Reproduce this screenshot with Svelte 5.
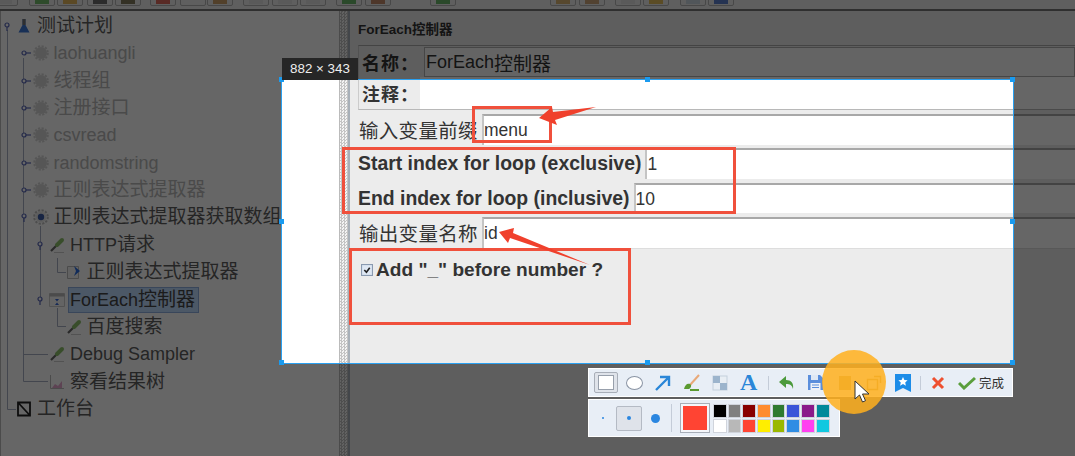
<script>
  const topButtons = [
    [-8, '#ddd'], [29, '#3fa535'], [57, '#e0a020'], [87, '#333'], [115, '#554a20'],
    [150, '#d83020'], [180, '#eee'], [207, '#c08030'], [243, '#ddd'], [272, '#ddd'],
    [300, '#ddd'], [336, '#30a030'], [365, '#b06030'], [430, '#30a030'], [550, '#d09a40'],
    [579, '#c08848'], [615, '#ddd'], [643, '#e0a820'], [680, '#bcd'], [708, '#2050c0']
  ];

  const tree = [
    { level: 0, toggle: 'open', icon: 'flask', text: '测试计划', cjk: true },
    { level: 1, toggle: 'shut', icon: 'gear', text: 'laohuangli', off: true },
    { level: 1, toggle: 'shut', icon: 'gear', text: '线程组', cjk: true, off: true },
    { level: 1, toggle: 'shut', icon: 'gear', text: '注册接口', cjk: true, off: true },
    { level: 1, toggle: 'shut', icon: 'gear', text: 'csvread', off: true },
    { level: 1, toggle: 'shut', icon: 'gear', text: 'randomstring', off: true },
    { level: 1, toggle: 'shut', icon: 'gear', text: '正则表达式提取器', cjk: true, off: true },
    { level: 1, toggle: 'open', icon: 'gearOn', text: '正则表达式提取器获取数组', cjk: true },
    { level: 2, toggle: 'open', icon: 'dropper', text: 'HTTP', tail: '请求' },
    { level: 3, icon: 'extract', text: '正则表达式提取器', cjk: true },
    { level: 2, toggle: 'open', icon: 'loop', text: 'ForEach', tail: '控制器', selected: true },
    { level: 3, icon: 'dropper', text: '百度搜索', cjk: true },
    { level: 2, icon: 'dropper', text: 'Debug Sampler' },
    { level: 2, icon: 'chart', text: '察看结果树', cjk: true },
    { level: 0, icon: 'bench', text: '工作台', cjk: true }
  ];

  const handles = [
    [0, 0], [50, 0], [100, 0], [0, 50], [100, 50], [0, 100], [50, 100], [100, 100]
  ];

  const swatches = [
    '#000000', '#808080', '#880000', '#ff8c2f', '#2f7a2f', '#3b55d8', '#8a1a8a', '#00899a',
    '#ffffff', '#b8b8b8', '#ff4433', '#ffee00', '#9ab800', '#2f8de4', '#ff40f0', '#10c8e0'
  ];
</script>

{#snippet treeIcon(name)}
  <svg class="ticon" viewBox="0 0 16 16" width="16" height="16">
    {#if name === 'flask'}
      <path d="M6.500 1h3v6l4 7.500h-11l4-7.500z" fill="#3c78d8" />
      <path d="M6.500 1h3v6h-3z" fill="#777" />
    {:else if name === 'gear'}
      <circle cx="8" cy="8" r="6" fill="#d8d8d8" />
      <circle cx="8" cy="8" r="6.800" fill="none" stroke="#d8d8d8" stroke-width="2" stroke-dasharray="2.200 1.400" />
    {:else if name === 'gearOn'}
      <circle cx="8" cy="8" r="6.800" fill="none" stroke="#c0c0c0" stroke-width="2" stroke-dasharray="2.200 1.400" />
      <circle cx="8" cy="8" r="5.400" fill="#e8e8e8" />
      <circle cx="8" cy="8" r="3.200" fill="#3c5ca8" />
    {:else if name === 'dropper'}
      <path d="M2 14l7-7" stroke="#666" stroke-width="2.200" />
      <path d="M8 8l5-5" stroke="#8cc06a" stroke-width="4" stroke-linecap="round" />
      <path d="M5 15.500h10" stroke="#ccc" />
    {:else if name === 'extract'}
      <path d="M1.500 2.500h11v12h-11z" fill="#f4f4f4" stroke="#bbb" />
      <path d="M8 2l6 5-6 5 2-5z" fill="#2a6ce0" />
    {:else if name === 'loop'}
      <path d="M.5 1.500h15v13H.5z" fill="#fafafa" stroke="#ccc" />
      <path d="M.5 1.500h15v3H.5z" fill="#bbb" />
      <path d="M6 7h4l-2 2.500zM6 13h4l-2-2.500z" fill="#3a6ad8" />
    {:else if name === 'chart'}
      <path d="M1.500 1v13.500H15" fill="none" stroke="#bbb" />
      <path d="M3 14l3-4 3 2 4-5v7z" fill="#e8a8d0" />
    {:else}
      <path d="M2 1.500h12v13H2zM2 1.500l12 13" fill="none" stroke="#222" stroke-width="1.800" />
    {/if}
  </svg>
{/snippet}

<div class="app">
  <div class="topbar">
    {#each topButtons as [left, color]}
      <span class="tbtn" style="left:{left}px"><i style="background:{color}"></i></span>
    {/each}
  </div>

  <div class="main">
    <div class="tree">
      <svg class="guides" viewBox="0 11 340 445" width="340" height="445">
        <path d="M7.500 30v379.500H18M23.500 58v323.500H48M23.500 354.500H48M40.500 226v72M57.500 258v14.500H66M57.500 308v18.500H66" />
      </svg>
      {#each tree as row}
        <div class="node" style="padding-left:{row.level * 16.5}px">
          <span class="toggle">
            {#if row.toggle === 'open'}
              <svg viewBox="0 0 14 14" width="14" height="14"><circle cx="7" cy="6" r="2" /><path d="M7 8v4" /></svg>
            {:else if row.toggle === 'shut'}
              <svg viewBox="0 0 14 14" width="14" height="14"><circle cx="7" cy="7" r="2" /><path d="M9 7h5" /></svg>
            {/if}
          </span>
          {@render treeIcon(row.icon)}
          <span class="label" class:off={row.off} class:selected={row.selected} class:cjk={row.cjk}>
            {row.text}{#if row.tail}<span class="cjk">{row.tail}</span>{/if}
          </span>
        </div>
      {/each}
    </div>

    <div class="splitter"></div>

    <div class="pane">
      <div class="title">ForEach控制器</div>
      <div class="row name">
        <span class="key strong cjk">名称：</span>
        <span class="field">ForEach<span class="cjk">控制器</span></span>
      </div>
      <div class="row comment">
        <span class="key strong cjk">注释：</span>
      </div>
      <div class="row prefix">
        <span class="key cjk">输入变量前缀</span>
        <span class="field">menu</span>
      </div>
      <div class="row start">
        <span class="key strong">Start index for loop (exclusive)</span>
        <span class="field">1</span>
      </div>
      <div class="row end">
        <span class="key strong">End index for loop (inclusive)</span>
        <span class="field">10</span>
      </div>
      <div class="row output">
        <span class="key cjk">输出变量名称</span>
        <span class="field">id</span>
      </div>
      <div class="check">
        <svg class="box" viewBox="0 0 11 11" width="12" height="12">
          <rect x=".5" y=".5" width="10" height="10" fill="#dfe8f4" stroke="#8a9ab0" />
          <path d="M3 5.500l2 2 3-4" fill="none" stroke="#222" stroke-width="1.500" />
        </svg>
        <span>Add "_" before number ?</span>
      </div>
    </div>
  </div>

  <!-- capture tool laid over the app -->
  <div class="selection">
    {#each handles as [x, y]}
      <span class="handle" style="left:{x}%;top:{y}%"></span>
    {/each}
  </div>
  <div class="size">882 × 343</div>

  <span class="mark mark-prefix"></span>
  <span class="mark mark-loop"></span>
  <span class="mark mark-check"></span>
  <svg class="arrows" viewBox="0 0 1075 456" width="1075" height="456">
    <path d="M539 118l13-11 1 5 43-5-41 13 2 5z" />
    <path d="M499 232l15-4-1 5 77 32-80-27-2 5z" />
  </svg>

  <div class="tools">
    <div class="toolrow">
      <span class="tool">
        <span class="current"><i class="rect"></i></span>
      </span>
      <span class="tool"><i class="oval"></i></span>
      <span class="tool">
        <svg viewBox="0 0 18 18" width="18" height="18"><path d="M2 16L14 4M6 3h9v9" fill="none" stroke="#2a86d8" stroke-width="2.400" /></svg>
      </span>
      <span class="tool">
        <svg viewBox="0 0 20 18" width="20" height="18"><path d="M8 11l9-10" stroke="#e8a878" stroke-width="2" /><path d="M2 15c1-4 3-6 6-5 2 1 1 4-1 5z" fill="#5a9a30" /><path d="M8 16h9" stroke="#5a9a30" stroke-width="2" /></svg>
      </span>
      <span class="tool">
        <svg viewBox="0 0 16 16" width="16" height="16"><rect x="1" y="1" width="14" height="14" fill="#e8eef4" stroke="#c4d0dc" /><path d="M1 1h7v7H1zM8 8h7v7H8z" fill="#9cb4cc" /></svg>
      </span>
      <span class="tool letter">A</span>
      <span class="sep wide"></span>
      <span class="tool gap">
        <svg viewBox="0 0 18 16" width="18" height="16"><path d="M8 1L1 7l7 6V9c4 0 6 1 7 5 1-6-2-9-7-9z" fill="#4c9a3c" /></svg>
      </span>
      <span class="tool gap">
        <svg viewBox="0 0 17 17" width="17" height="17"><path d="M1 1h12l3 3v12H1z" fill="#5a8edc" /><path d="M4 1h7v5H4z" fill="#dfe8f4" /><path d="M3.500 9h10v7h-10z" fill="#eef2f8" /><path d="M5 11h7M5 13.500h7" stroke="#5a8edc" /></svg>
      </span>
      <span class="tool gap">
        <svg viewBox="0 0 14 16" width="14" height="16"><path d="M1 1h12v14H1z" fill="#b8a060" /></svg>
      </span>
      <span class="tool gap">
        <svg viewBox="0 0 16 16" width="16" height="16"><path d="M1.500 4.500h10v10h-10zM8 1.500h6.500V8" fill="none" stroke="#b89a50" stroke-width="1.400" /></svg>
      </span>
      <span class="tool gap">
        <svg viewBox="0 0 16 18" width="16" height="18"><path d="M0 0h16v18l-8-4-8 4z" fill="#1c8ce8" /><path d="M8 3l1.400 3 3.200.300-2.400 2.200.700 3.200L8 10l-2.900 1.700.700-3.200-2.400-2.200 3.200-.300z" fill="#fff" /></svg>
      </span>
      <span class="sep"></span>
      <span class="tool close">
        <svg viewBox="0 0 14 14" width="14" height="14"><path d="M2 2l10 10M12 2L2 12" stroke="#ee5030" stroke-width="3" /></svg>
      </span>
      <span class="tool done">
        <svg viewBox="0 0 18 14" width="18" height="14"><path d="M1 7l5 5L17 2" fill="none" stroke="#5a9e3c" stroke-width="3" /></svg>
      </span>
      <span class="finish">完成</span>
    </div>
    <div class="toolrow second">
      <span class="dot"><i class="s"></i></span>
      <span class="dot active"><i class="m"></i></span>
      <span class="dot"><i class="l"></i></span>
      <span class="sep tall"></span>
      <span class="picked"><i></i></span>
      <div class="colors">
        {#each swatches as color}
          <span class="swatch" style="background:{color}"></span>
        {/each}
      </div>
    </div>
  </div>

  <span class="halo"></span>
  <svg class="pointer" viewBox="0 0 16 24" width="16" height="24">
    <path d="M1 1v18l4.500-4 3 7 3-1.300-3-6.700H15z" fill="#fff" stroke="#333" />
  </svg>
</div>

<style>
  :global(body) {
    background: #666;
  }

  .app {
    position: relative;
    width: 1075px;
    height: 456px;
    overflow: hidden;
    display: flex;
    flex-direction: column;
    background: #eee;
    color: #333;
    font-family: "Liberation Sans", "Noto Sans CJK SC", sans-serif;
  }

  .topbar {
    position: relative;
    flex: none;
    height: 9px;
    border-bottom: 2px solid #777;
  }

  .tbtn {
    position: absolute;
    top: -14px;
    width: 26px;
    height: 20px;
    display: flex;
    align-items: flex-end;
    justify-content: center;
    border: 1px solid #b4b4b4;
    border-radius: 2px;
    box-sizing: border-box;
  }

  .tbtn i {
    width: 14px;
    height: 5px;
    margin-bottom: 1px;
    opacity: .7;
  }

  .main {
    flex: 1;
    display: flex;
    min-height: 0;
  }

  .tree {
    position: relative;
    flex: none;
    box-sizing: border-box;
    width: 340px;
    padding-top: 1.300px;
    background: #fff;
    border-left: 1px solid #bbb;
    border-right: 1px solid #bbb;
  }

  .guides {
    position: absolute;
    left: -1px;
    top: 0;
  }

  .guides path {
    fill: none;
    stroke: #a8aec4;
    stroke-width: 1;
  }

  .node {
    position: relative;
    height: 27.360px;
    display: flex;
    align-items: center;
    white-space: nowrap;
  }

  .toggle {
    flex: none;
    width: 14px;
    height: 14px;
    margin-left: -1px;
    margin-right: 2px;
  }

  .toggle svg {
    display: block;
  }

  .toggle circle,
  .toggle path {
    fill: #fff;
    stroke: #5a68b8;
    stroke-width: 1.2;
  }

  .ticon {
    flex: none;
    margin-right: 5px;
    background: #fff;
  }

  .label {
    font-size: 18px;
    line-height: 24px;
    color: #5c5c5c;
    border: 1px solid transparent;
    margin-left: -1px;
  }

  .label.off {
    color: #b8b8b8;
  }

  .label.selected {
    margin-left: -2px;
    padding: 0 3px 0 1px;
    background: #bfdcff;
    border-color: #8fb0e0;
    color: #444;
  }

  .cjk {
    font-size: 19px;
  }

  .splitter {
    flex: none;
    width: 8px;
    background: repeating-conic-gradient(#c4c4c4 0 25%, #f4f4f4 0 50%) 0 0 / 3px 3px;
  }

  .pane {
    flex: 1;
    min-width: 0;
    padding: 0 0 0 8px;
    border-left: 2px solid #a8b0b8;
    background: #ececec;
    font-size: 17.500px;
  }

  .title {
    height: 34px;
    line-height: 38px;
    font-size: 13.500px;
    font-weight: 700;
  }

  .row {
    display: flex;
    align-items: stretch;
  }

  .key {
    display: flex;
    align-items: center;
    white-space: nowrap;
  }

  .key.strong {
    font-weight: 700;
    font-size: 19.400px;
    padding-right: 4px;
  }

  .key.cjk {
    padding-left: 1px;
  }

  .field {
    flex: 1;
    display: flex;
    align-items: center;
    padding-left: 0;
    background: #fff;
    border-top: 2px solid #a8a8a8;
    border-left: 2px solid #c4c4c4;
    white-space: nowrap;
  }

  .name {
    height: 32px;
    border-top: 1px solid #aaa;
    border-left: 1px solid #ccc;
    box-sizing: border-box;
    align-items: stretch;
  }

  .name .key {
    width: 65px;
    padding: 0 0 0 3px;
    box-sizing: border-box;
    font-size: 18px;
    letter-spacing: 1px;
  }

  .name .field {
    background: #fbfbfb;
    margin: 1px 0 0;
    border: 1px solid #b0b0b0;
    padding-left: 1px;
    font-size: 18px;
  }

  .comment {
    height: 33px;
    box-sizing: border-box;
    background: #fff;
    border-bottom: 1px solid #b8b8b8;
    border-left: 1px solid #ccc;
  }

  .comment .key {
    width: 61px;
    padding: 0 0 0 3px;
    background: #ececec;
    box-sizing: border-box;
    font-size: 18px;
    letter-spacing: 1px;
  }

  .prefix,
  .output {
    height: 31px;
    margin-top: 4px;
  }

  .prefix .key,
  .output .key {
    width: 124px;
    box-sizing: border-box;
    font-size: 19.500px;
    letter-spacing: .3px;
  }

  .start,
  .end {
    height: 31px;
    margin-top: 3px;
  }

  .end {
    height: 30px;
    margin-top: 4px;
  }

  .output {
    margin-top: 4px;
    border-bottom: 1px solid #ddd;
  }

  .check {
    display: flex;
    align-items: center;
    gap: 3px;
    margin: 9px 0 0 3px;
    height: 24px;
    font-size: 19.100px;
    font-weight: 700;
  }

  .box {
    flex: none;
  }

  .selection {
    position: absolute;
    left: 282px;
    top: 80px;
    width: 731px;
    height: 283px;
    box-shadow: 0 0 0 1px #2aa0f0, 0 0 0 1200px rgba(0, 0, 0, .6);
  }

  .handle {
    position: absolute;
    width: 5px;
    height: 5px;
    margin: -3px 0 0 -3px;
    background: #1a9bf0;
  }

  .size {
    position: absolute;
    left: 282px;
    top: 58px;
    width: 76px;
    height: 22px;
    line-height: 22px;
    text-align: center;
    background: #262626;
    color: #eee;
    font-size: 13.400px;
  }

  .mark {
    position: absolute;
    border: 3px solid #f0503c;
    box-sizing: border-box;
  }

  .mark-prefix {
    left: 472px;
    top: 106px;
    width: 80px;
    height: 37px;
  }

  .mark-loop {
    left: 342px;
    top: 147px;
    width: 394px;
    height: 67px;
  }

  .mark-check {
    left: 349px;
    top: 248px;
    width: 282px;
    height: 77px;
  }

  .arrows {
    position: absolute;
    left: 0;
    top: 0;
  }

  .arrows path {
    fill: #f0402c;
  }

  .tools {
    position: absolute;
    left: 588px;
    top: 368px;
    display: flex;
    flex-direction: column;
    align-items: flex-start;
    gap: 2px;
  }

  .toolrow {
    display: flex;
    align-items: center;
    box-sizing: border-box;
    width: 425px;
    height: 29px;
    padding-left: 3px;
    background: #e8eef6;
    border: 1px solid #fff;
  }

  .tool {
    flex: none;
    width: 28.500px;
    height: 27px;
    display: flex;
    align-items: center;
    justify-content: center;
  }

  .tool.gap {
    width: 29px;
  }

  .current {
    width: 24px;
    height: 21px;
    display: flex;
    align-items: center;
    justify-content: center;
    border: 1px solid #a8aeb8;
    border-radius: 2px;
    background: #dfe3ea;
    box-sizing: border-box;
  }

  .rect {
    width: 14px;
    height: 13px;
    background: #fff;
    border: 1px solid #98a0ac;
  }

  .oval {
    width: 15px;
    height: 12px;
    border-radius: 50%;
    background: #fff;
    border: 1px solid #8a94a4;
  }

  .letter {
    font-family: "Liberation Serif", serif;
    font-weight: 700;
    font-size: 24px;
    color: #2a86d8;
  }

  .sep {
    flex: none;
    width: 1px;
    height: 14px;
    margin: 0 3px;
    background: #c4ccd8;
  }

  .sep.wide {
    margin: 0 3px 0 5px;
  }

  .sep.tall {
    height: 28px;
    margin: 0 8px 0 3px;
  }

  .tool.close {
    width: 28px;
  }

  .tool.done {
    width: 30px;
  }

  .finish {
    margin-left: -3px;
    font-size: 12.500px;
    color: #333;
  }

  .second {
    width: 252px;
    height: 38px;
    padding-left: 1px;
  }

  .dot {
    flex: none;
    width: 26px;
    height: 25px;
    display: flex;
    align-items: center;
    justify-content: center;
    box-sizing: border-box;
  }

  .dot.active {
    background: #dfe3ea;
    border: 1px solid #b4bac4;
    border-radius: 2px;
  }

  .dot i {
    border-radius: 50%;
    background: #2a86e0;
  }

  .s {
    width: 2px;
    height: 2px;
  }

  .m {
    width: 4px;
    height: 4px;
  }

  .l {
    width: 9px;
    height: 9px;
  }

  .picked {
    flex: none;
    width: 30px;
    height: 30px;
    box-sizing: border-box;
    padding: 2px;
    border: 1px solid #a8aeb8;
    background: #f4f6fa;
  }

  .picked i {
    display: block;
    width: 100%;
    height: 100%;
    background: #ff4433;
  }

  .colors {
    display: grid;
    grid-template-columns: repeat(8, 13.700px);
    grid-auto-rows: 14px;
    gap: 1px;
    margin-left: 3px;
  }

  .swatch {
    box-sizing: border-box;
    border: 1px solid #d0d4dc;
  }

  .halo {
    position: absolute;
    left: 822px;
    top: 350px;
    width: 64px;
    height: 64px;
    border-radius: 50%;
    background: rgba(255, 176, 30, .86);
  }

  .pointer {
    position: absolute;
    left: 854px;
    top: 380px;
  }
</style>
